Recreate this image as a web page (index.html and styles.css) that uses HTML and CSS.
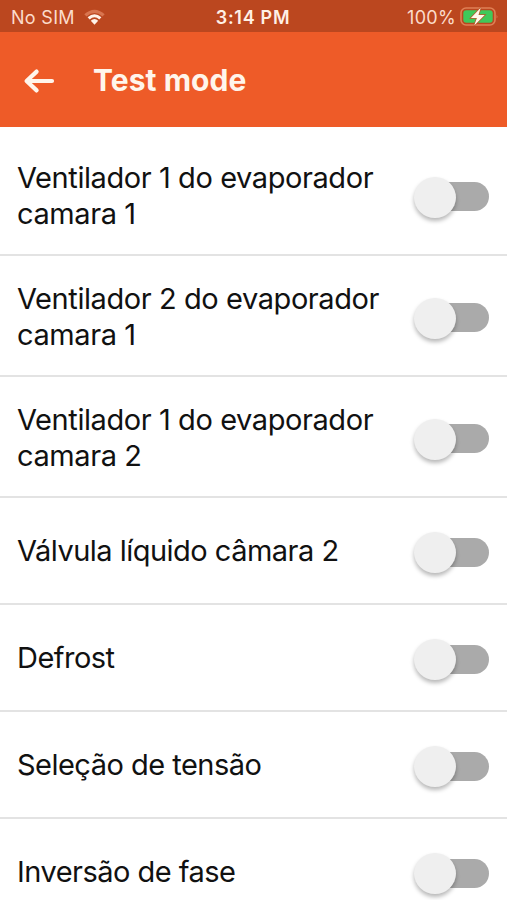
FILE: index.html
```html
<!DOCTYPE html>
<html lang="pt">
<head>
<meta charset="utf-8">
<title>Test mode</title>
<link rel="stylesheet" href="styles.css">
</head>
<body>
<div class="status">
  <div class="status-left"><span class="carrier">No SIM</span>
    <svg class="wifi" width="23" height="17" viewBox="0 0 22 17"><path d="M.8 5.2Q11-3.8 21.2 5.2L19 7.4Q11 .5 3 7.4Z" fill="#d9754f"/><path d="M4.1 8.2Q11 2.4 17.9 8.2L15.8 10.4Q11 6.3 6.2 10.4Z" fill="#fff3e9"/><path d="M7.3 11.7Q11 8.4 14.7 11.7L11 15.8Z" fill="#fff3e9"/></svg>
  </div>
  <div class="clock">3:14 PM</div>
  <div class="status-right"><span class="percent">100%</span>
    <svg class="battery" width="39" height="22" viewBox="0 0 39 22"><rect x="1" y="2" width="34" height="17" rx="5" fill="none" stroke="#df8055" stroke-width="1.6"/><rect x="3.3" y="4.3" width="29.4" height="12.4" rx="3" fill="#3fc95a"/><path d="M36.6 8.4q1.6 2 0 4.2z" fill="#df8055"/><path d="M20.7 1.8 10.9 12h6l-2.7 7.5L24.7 8.9h-6.2z" fill="#fff8ed" stroke="#b9572a" stroke-width="1.5" paint-order="stroke"/></svg>
  </div>
</div>
<header class="bar">
  <svg class="back" width="32" height="28" viewBox="0 0 32 28"><path d="M13.6 4.6 3.6 14l10 9.4M4 14h25" fill="none" stroke="#fff5eb" stroke-width="4.2" stroke-linejoin="round" stroke-linecap="round"/></svg>
  <h1 class="title">Test mode</h1>
</header>
<main class="list">
  <div class="row tall"><span class="label">Ventilador 1 do evaporador<br>camara 1</span><span class="switch"></span></div>
  <div class="row tall"><span class="label">Ventilador 2 do evaporador<br>camara 1</span><span class="switch"></span></div>
  <div class="row tall"><span class="label">Ventilador 1 do evaporador<br>camara 2</span><span class="switch"></span></div>
  <div class="row"><span class="label">Válvula líquido câmara 2</span><span class="switch"></span></div>
  <div class="row"><span class="label">Defrost</span><span class="switch"></span></div>
  <div class="row"><span class="label">Seleção de tensão</span><span class="switch"></span></div>
  <div class="row"><span class="label">Inversão de fase</span><span class="switch"></span></div>
</main>
</body>
</html>
```
FILE: styles.css
```css
* { box-sizing: border-box; }
html, body { height: 900px; overflow: hidden; }
body { margin: 0; background: #fff; font-family: Inter, "Liberation Sans", sans-serif; color: #111; display: flex; flex-direction: column; }
.status { height: 32px; flex: none; background: #bb471f; color: #fbdccb; display: grid; grid-template-columns: 1fr auto 1fr; align-items: center; padding: 3px 8px 0 11px; font-size: 18px; line-height: 22px; }
.status-left, .status-right { display: flex; align-items: center; }
.status-left { gap: 8px; letter-spacing: 0.3px; }
.status-right { justify-content: flex-end; gap: 4px; letter-spacing: 0.3px; }
.status svg { display: block; }
.battery { margin-top: -1px; }
.clock { font-weight: 600; color: #fff0e6; letter-spacing: 0.7px; margin-left: -4px; }
.bar { height: 95px; flex: none; background: #ee5b28; display: flex; align-items: center; padding: 1px 0 0 23px; gap: 38px; }
.back { margin-top: 2px; }
.title { margin: 0; font-size: 30px; line-height: 36px; font-weight: 700; color: #fff5eb; letter-spacing: 0.05px; }
.list { padding-top: 8px; flex: none; }
.row { height: 107px; border-bottom: 2px solid #e3e3e3; display: flex; align-items: center; justify-content: space-between; padding: 1px 18px 0 17px; }
.tall { height: 121px; padding-top: 2px; }
.label { font-size: 29px; line-height: 35.5px; letter-spacing: -0.52px; white-space: nowrap; }
.tall .label { letter-spacing: -0.42px; }
.switch { width: 75px; height: 42px; flex: none; display: flex; align-items: center; position: relative; top: 1px; }
.switch::before { content: ""; width: 61px; height: 29px; margin-left: 14px; border-radius: 15px; background: #aaa; }
.switch::after { content: ""; position: absolute; left: 0; top: 1px; width: 42px; height: 41px; border-radius: 50%; background: #efefef; box-shadow: 0 3px 4px rgba(0, 0, 0, 0.28); }
```
